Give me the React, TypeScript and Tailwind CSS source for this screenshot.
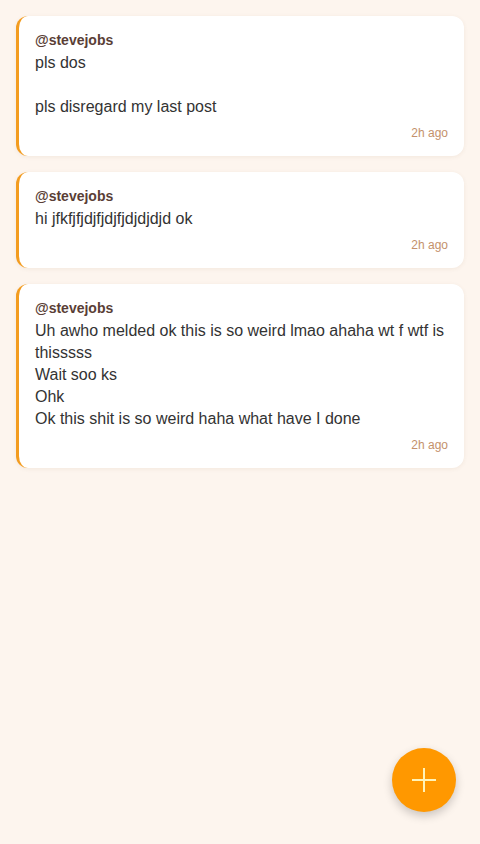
const posts = [
  { user: '@stevejobs', body: 'pls dos\n\npls disregard my last post', time: '2h ago' },
  { user: '@stevejobs', body: 'hi jfkfjfjdjfjdjfjdjdjdjd ok', time: '2h ago' },
  {
    user: '@stevejobs',
    body: 'Uh awho melded ok this is so weird lmao ahaha wt f wtf is thisssss\nWait soo ks\nOhk\nOk this shit is so weird haha what have I done',
    time: '2h ago',
  },
];

export default function App() {
  return (
    <main
      className="relative min-h-[844px] bg-[#fdf5ee] px-4 pt-4"
      style={{ fontFamily: '"Liberation Sans", Arial, sans-serif' }}
    >
      <div className="flex flex-col gap-4">
        {posts.map((p, i) => (
          <div
            key={i}
            className="rounded-xl border-l-[3px] border-[#f39c1f] bg-white pt-4 pb-[15px] pl-4 pr-4 shadow-[0_1px_4px_rgba(120,80,40,0.08)]"
          >
            <div className="text-sm font-bold leading-4 text-[#5a3e36]">{p.user}</div>
            <p className="mt-1 whitespace-pre-wrap text-base leading-[22px] text-[#333333]">
              {p.body}
            </p>
            <div className="mt-[7px] text-right text-xs leading-4 text-[#c4916b]">{p.time}</div>
          </div>
        ))}
      </div>

      <button className="absolute bottom-8 right-6 flex h-16 w-16 items-center justify-center rounded-full bg-[#ff9800] shadow-[0_4px_10px_rgba(0,0,0,0.2)]">
        <svg width="24" height="24" viewBox="0 0 24 24" fill="none" stroke="#fff3b8" strokeWidth="2" strokeLinecap="butt">
          <path d="M12 0v24M0 12h24" />
        </svg>
      </button>
    </main>
  );
}
